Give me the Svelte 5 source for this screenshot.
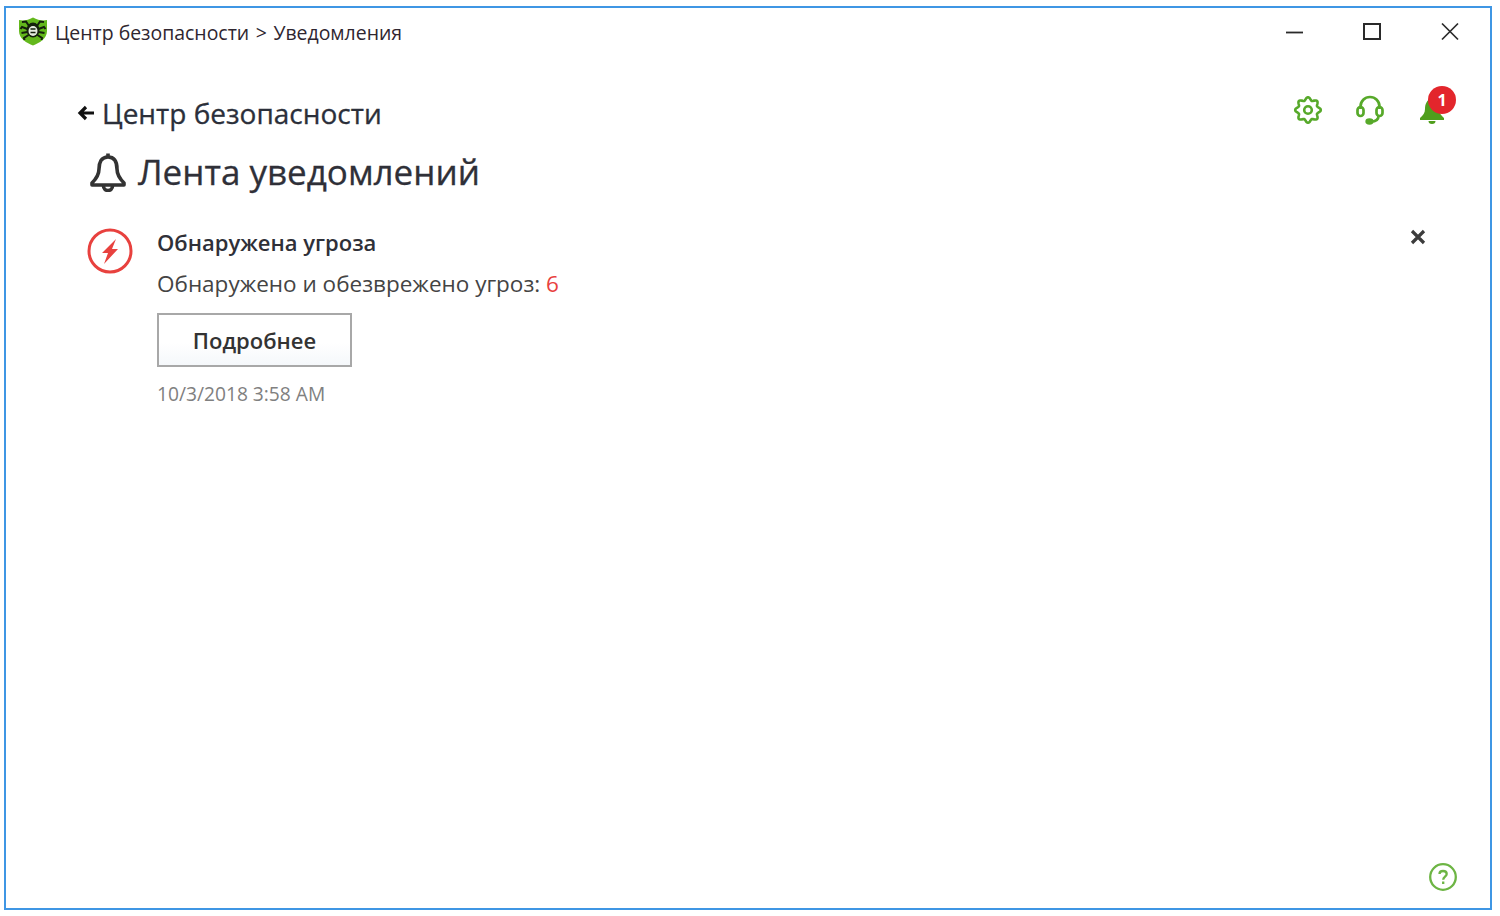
<script>
	let threats = 6;

	// scalloped outline for the settings gear, 8 lobes
	function gearPath(cx, cy, r, amp, lobes) {
		let d = '';
		for (let i = 0; i < 96; i++) {
			const a = (i / 96) * Math.PI * 2;
			const rad = r + amp * Math.cos(a * lobes);
			d += (i ? 'L' : 'M') + (cx + rad * Math.cos(a)).toFixed(2) + ' ' + (cy + rad * Math.sin(a)).toFixed(2);
		}
		return d + 'Z';
	}
</script>

<div class="window">
	<header class="titlebar">
		<svg class="logo" width="30" height="30" viewBox="0 0 30 30">
			<path d="M1 3 C6 4 10 3 15 0.500 C20 3 24 4 29 3 L29 14 C29 22 21 26 15 28.500 C9 26 1 22 1 14 Z" fill="#63b81c"/>
			<g stroke="#14200c" stroke-width="2" fill="none">
				<path d="M11 9 L8 4.500 L4 5 M9.500 12 L4 10 L2.500 12 M9.500 15 L3.500 16 M10.500 18 L6 21 L6.500 23 M19 9 L22 4.500 L26 5 M20.500 12 L26 10 L27.500 12 M20.500 15 L26.500 16 M19.500 18 L24 21 L23.500 23"/>
			</g>
			<ellipse cx="15" cy="13" rx="6.500" ry="7.500" fill="#14200c"/>
			<ellipse cx="15" cy="14" rx="4.500" ry="5" fill="#e6ebe0"/>
			<path d="M12.500 12 H17.500 M12.500 15.500 H17.500" stroke="#14200c" stroke-width="1.300"/>
		</svg>
		<span class="title">Центр безопасности <span class="sep">&gt;</span> Уведомления</span>
		<div class="winctl">
			<svg width="20" height="20" viewBox="0 0 20 20"><path d="M2 10.500 H19" stroke="#2a2a2a" stroke-width="1.800"/></svg>
			<svg width="20" height="20" viewBox="0 0 20 20"><rect x="2" y="2" width="16" height="15" fill="none" stroke="#2a2a2a" stroke-width="2"/></svg>
			<svg width="20" height="20" viewBox="0 0 20 20"><path d="M2 1.500 L18 17.500 M18 1.500 L2 17.500" stroke="#2a2a2a" stroke-width="1.700"/></svg>
		</div>
	</header>

	<div class="content">
		<div class="toolbar">
			<svg width="30" height="30" viewBox="0 0 30 30" fill="none" stroke="#57a92a" stroke-width="2.600">
				<path d={gearPath(15, 15, 11.300, 1.500, 8)} stroke-linejoin="round"/>
				<circle cx="15" cy="15" r="3.800"/>
			</svg>
			<svg width="30" height="30" viewBox="0 0 30 30" fill="none" stroke="#57a92a" stroke-width="2.700">
				<path d="M5.500 14 V11.500 a9.500 9.500 0 0 1 19 0 V14"/>
				<rect x="2.500" y="12" width="6" height="9" rx="3"/>
				<rect x="21.500" y="12" width="6" height="9" rx="3"/>
				<path d="M23.500 21 C23.500 25 20 26.500 16 26.500"/>
				<ellipse cx="14.500" cy="26.500" rx="2.800" ry="1.800" fill="#57a92a"/>
			</svg>
			<div class="bell-wrap">
				<svg width="30" height="30" viewBox="0 0 30 30">
					<path d="M15 4 C20 4 22 9 22 14 C22 18 24 20 27 23 V25 H3 V23 C6 20 8 18 8 14 C8 9 10 4 15 4 Z M11.500 26 H18.500 A3.500 3 0 0 1 11.500 26 Z" fill="#4f9e1c"/>
				</svg>
				<span class="badge">1</span>
			</div>
		</div>

		<a class="back" href="#top">
			<svg width="18" height="18" viewBox="0 0 18 18" fill="none" stroke="#111" stroke-width="3.200"><path d="M17 9 H3 M9 3 L3 9 L9 15"/></svg>
			<span>Центр безопасности</span>
		</a>

		<h1>
			<svg width="38" height="40" viewBox="0 0 38 40" fill="none" stroke="#333" stroke-width="3.600" stroke-linejoin="round">
				<path d="M19 5 C26 5 28 11 28 17 C28 23 31 27 35 31 V33 H3 V31 C7 27 10 23 10 17 C10 11 12 5 19 5 Z"/>
				<path d="M19 1.500 V5"/>
				<path d="M14.500 34 A4.500 4.500 0 0 0 23.500 34"/>
			</svg>
			<span>Лента уведомлений</span>
		</h1>

		<article class="notice">
			<svg class="threat" width="46" height="46" viewBox="0 0 46 46">
				<circle cx="23" cy="23" r="21" fill="none" stroke="#e8413e" stroke-width="3"/>
				<path d="M29 11 L15 25 H21 L17 36 L31 21 H25 Z" fill="#e8413e"/>
			</svg>
			<div class="body">
				<h2>Обнаружена угроза</h2>
				<p class="msg">Обнаружено и обезврежено угроз: <span class="count">{threats}</span></p>
				<button type="button">Подробнее</button>
				<time>10/3/2018 3:58 AM</time>
			</div>
			<svg class="dismiss" width="18" height="18" viewBox="0 0 18 18"><path d="M3 3 L15 15 M15 3 L3 15" stroke="#3c3c3c" stroke-width="3.200"/></svg>
		</article>

		<div class="footer">
			<svg width="30" height="30" viewBox="0 0 30 30" fill="none" stroke="#6db544" stroke-width="2.300">
				<circle cx="15" cy="15" r="12.800"/>
				<path d="M11.500 12 C11.500 10 13 9 15 9 C17.500 9 18.700 10.300 18.700 12 C18.700 14.700 15.200 14.800 15.200 17.800"/>
				<path d="M15.200 19.500 V22"/>
			</svg>
		</div>
	</div>
</div>

<style>
	:global(body) {
		margin: 0;
		background: #fff;
		font-family: "Open Sans", "Noto Sans", sans-serif;
		color: #333;
	}

	.window {
		box-sizing: border-box;
		width: 1488px;
		height: 904px;
		margin: 6px 0 0 4px;
		border: 2px solid #3f96e4;
		display: flex;
		flex-direction: column;
		background: #fff;
	}

	.titlebar {
		display: flex;
		align-items: center;
		height: 48px;
		padding: 0 30px 0 12px;
		flex: none;
	}

	.logo {
		margin-right: 7px;
	}

	.title {
		font-size: 19.450px;
		color: #2f2630;
	}

	.sep {
		margin: 0 1.500px;
	}

	.winctl {
		margin-left: auto;
		display: flex;
		gap: 58px;
	}

	.content {
		flex: 1;
		display: flex;
		flex-direction: column;
		position: relative;
		min-height: 0;
	}

	.toolbar {
		position: absolute;
		top: 39px;
		right: 43px;
		display: flex;
		gap: 32px;
		align-items: center;
	}

	.bell-wrap {
		position: relative;
		width: 30px;
		height: 30px;
	}

	.badge {
		position: absolute;
		top: -9px;
		right: -9px;
		width: 28px;
		height: 28px;
		border-radius: 50%;
		background: #e3262c;
		color: #fff;
		font-size: 16px;
		font-weight: 700;
		text-align: center;
		line-height: 28px;
	}

	.back {
		display: flex;
		align-items: center;
		gap: 7px;
		margin: 35px 0 0 71px;
		color: #2b2f3a;
		text-decoration: none;
		font-size: 28px;
		line-height: 44px;
		-webkit-text-stroke: 0.3px #2b2f3a;
	}

	h1 {
		display: flex;
		align-items: center;
		gap: 11px;
		margin: 12px 0 0 83px;
		font-size: 35px;
		font-weight: 400;
		line-height: 50px;
		color: #2f3038;
		-webkit-text-stroke: 0.3px #2f3038;
	}

	.notice {
		display: flex;
		align-items: flex-start;
		margin: 30px 0 0 81px;
		padding-right: 63px;
	}

	.threat {
		flex: none;
		margin-top: 1px;
	}

	.body {
		margin-left: 24px;
		flex: 1;
		display: flex;
		flex-direction: column;
		align-items: flex-start;
	}

	h2 {
		margin: 0;
		font-size: 22px;
		font-weight: 600;
		line-height: 30px;
		color: #2f3038;
	}

	.msg {
		margin: 12px 0 0;
		font-size: 22.500px;
		line-height: 30px;
		color: #444;
	}

	.count {
		color: #e8413e;
	}

	button {
		box-sizing: border-box;
		width: 195px;
		height: 54px;
		margin-top: 14px;
		border: 2px solid #a8a8a8;
		background: linear-gradient(#fff 55%, #f5f8fb);
		font-family: inherit;
		font-size: 22px;
		font-weight: 600;
		color: #333;
	}

	time {
		margin-top: 12px;
		font-size: 19.200px;
		line-height: 30px;
		color: #808080;
	}

	.dismiss {
		flex: none;
		margin-top: 1px;
	}

	.footer {
		margin-top: auto;
		padding: 0 32px 16px 0;
		display: flex;
		justify-content: flex-end;
	}
</style>
